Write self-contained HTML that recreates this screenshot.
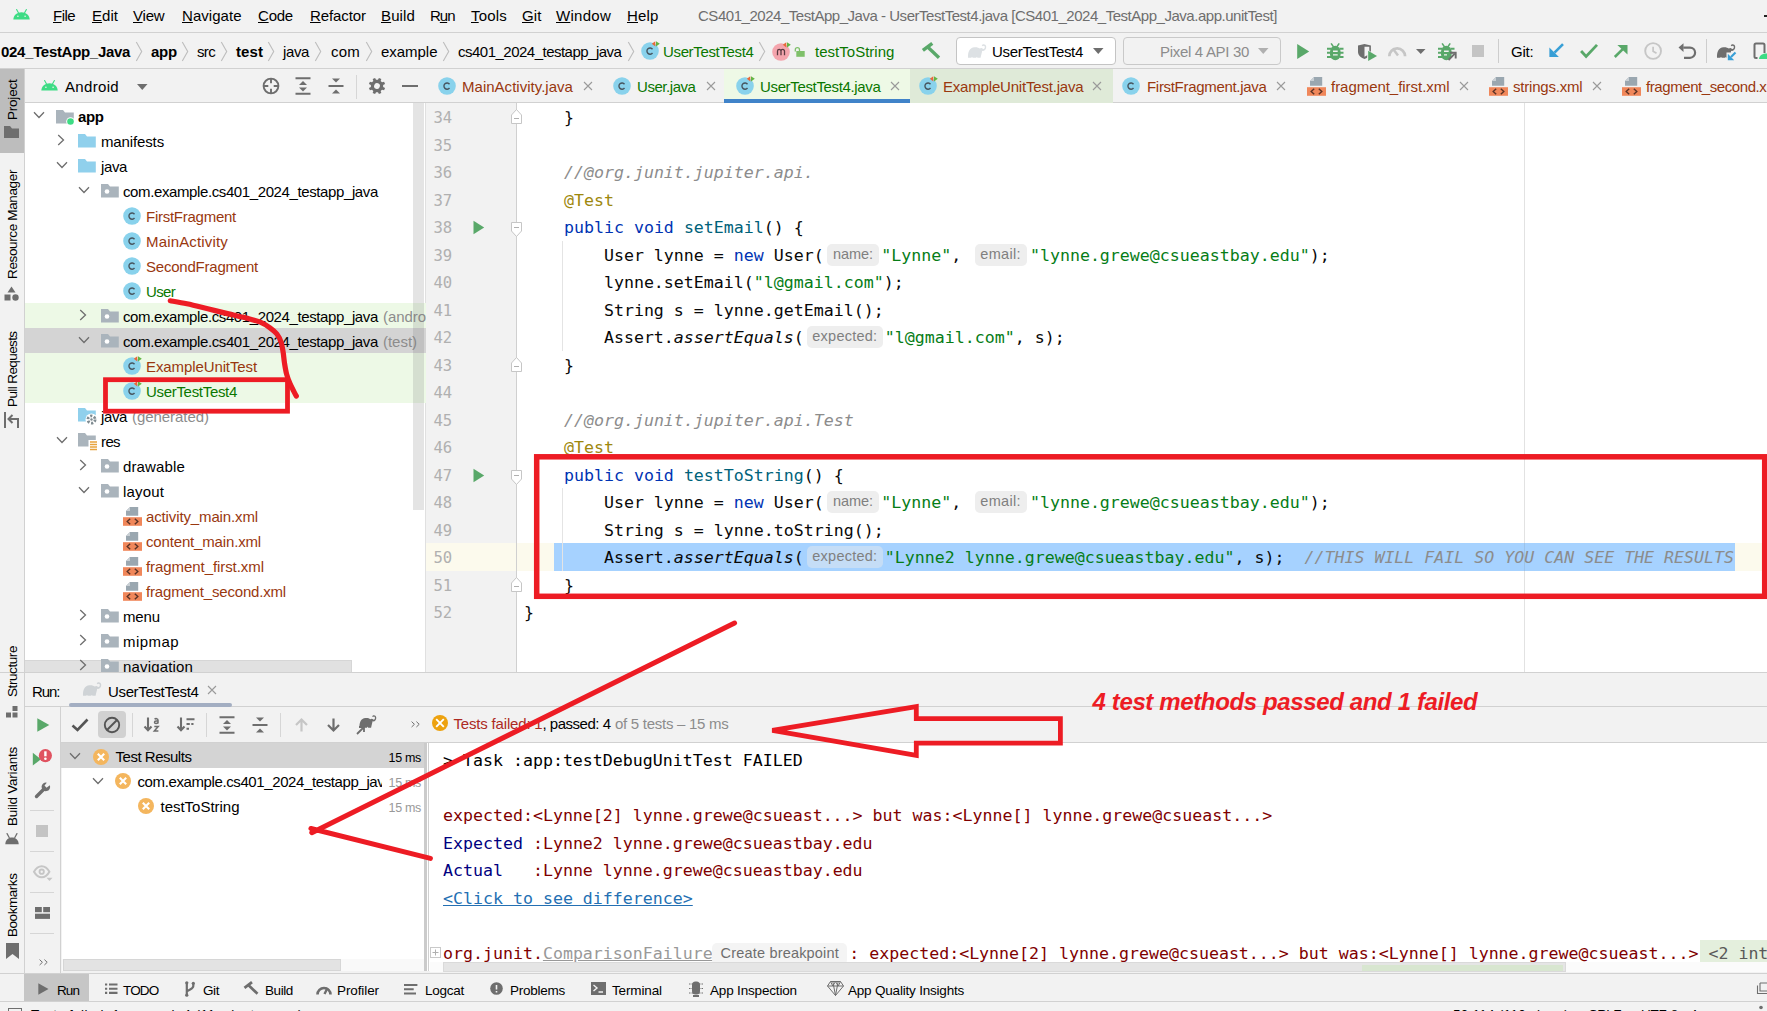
<!DOCTYPE html>
<html lang="en">
<head>
<meta charset="utf-8">
<title>CS401_2024_TestApp_Java - UserTestTest4.java</title>
<style>
html,body{margin:0;padding:0}
html{width:1767px;height:1011px;overflow:hidden}
body{width:1767px;height:1011px;overflow:hidden;position:relative;background:#f2f2f2;font-family:"Liberation Sans",sans-serif;font-size:15px;color:#000}
.root{position:absolute;left:0;top:0;width:1767px;height:1011px;overflow:hidden}
.a{position:absolute}
.t{position:absolute;white-space:pre;line-height:20px;height:20px;font-size:15px}
.b{font-weight:bold}
.g{color:#0a7700}
.br{color:#99380f}
.gy{color:#8c8c8c}
.m{font-family:"DejaVu Sans Mono","Liberation Mono",monospace;font-size:16.6px;letter-spacing:0}
.cl{position:absolute;left:524px;white-space:pre;height:28px;line-height:28px;font-family:"DejaVu Sans Mono","Liberation Mono",monospace;font-size:16.6px;color:#080808}
.ln{position:absolute;left:433.5px;width:22px;text-align:left;height:28px;line-height:28px;font-family:"DejaVu Sans Mono","Liberation Mono",monospace;font-size:15.600px;letter-spacing:-0.200px;color:#b0b0b0}
.kw{color:#0033b3}.st{color:#067d17}.cm{color:#8c8c8c;font-style:italic}.an{color:#9e880d}.fn{color:#00627a}.it{font-style:italic}
.hint{display:inline-block;box-sizing:border-box;height:22px;line-height:21px;vertical-align:middle;background:#eeeeee;border-radius:5px;color:#808080;font-family:"Liberation Sans",sans-serif;font-size:14.5px;text-align:center;margin:0 2.300px 0 3.300px;position:relative;top:-1.700px}
.sel .hint{background:#c5ddf6}
.co{position:absolute;left:443px;white-space:pre;height:28px;line-height:28px;font-family:"DejaVu Sans Mono","Liberation Mono",monospace;font-size:16.6px;color:#7f0000}
.vt{position:absolute;white-space:pre;font-size:13.5px;line-height:20px;height:20px;transform-origin:0 0;transform:rotate(-90deg)}
svg{position:absolute;overflow:visible}
.hl{position:absolute;height:1px;background:#d1d1d1}
.vl{position:absolute;width:1px;background:#d1d1d1}
</style>
</head>
<body>
<div class="root">
<!-- ===== panel backgrounds ===== -->
<div class="hl" style="left:0;top:32px;width:1767px"></div>
<div class="hl" style="left:0;top:68px;width:1767px"></div>
<!-- left tool strip -->
<div class="a" style="left:0;top:69px;width:24px;height:905px;background:#f2f2f2"></div>
<div class="vl" style="left:24px;top:69px;height:905px"></div>
<div class="a" style="left:0;top:69px;width:24px;height:84px;background:#bdbdbd"></div>
<!-- project panel -->
<div class="a" style="left:25px;top:103px;width:402px;height:569px;background:#fff"></div>
<div class="hl" style="left:25px;top:102px;width:402px"></div>
<!-- editor -->
<div class="a" style="left:426px;top:103px;width:1341px;height:569px;background:#fff"></div>
<div class="hl" style="left:426px;top:102px;width:1341px"></div>
<div class="a" style="left:426px;top:103px;width:90px;height:569px;background:#f2f2f2"></div>
<div class="vl" style="left:516px;top:103px;height:569px;background:#d0d0d0"></div>
<div class="vl" style="left:1524px;top:103px;height:569px;background:#e2e2e2"></div>
<!-- bottom panel -->
<div class="hl" style="left:0;top:672px;width:1767px"></div>
<div class="hl" style="left:25px;top:706px;width:1742px"></div>
<div class="a" style="left:62px;top:744px;width:363px;height:226px;background:#fff"></div>
<div class="a" style="left:429px;top:743px;width:1338px;height:228px;background:#fff"></div>
<div class="hl" style="left:61px;top:742px;width:1706px"></div>
<div class="hl" style="left:0;top:973px;width:1767px"></div>
<div class="hl" style="left:0;top:1001px;width:1767px"></div>
<!-- ===== menu bar ===== -->
<svg style="left:13px;top:9px" width="17" height="11" viewBox="0 0 17 11"><path d="M0.3 10.6C0.6 6 4 3.2 8.5 3.2S16.4 6 16.7 10.6Z" fill="#3ddc84"/><path d="M3.6 0.5L5.4 3.8M13.4 0.5L11.6 3.8" stroke="#3ddc84" stroke-width="1.1" stroke-linecap="round"/><circle cx="4.9" cy="7.3" r="0.8" fill="#f2f2f2"/><circle cx="12.1" cy="7.3" r="0.8" fill="#f2f2f2"/></svg>
<span class="t" style="letter-spacing:-0.55px;left:53px;top:5.500px"><u>F</u>ile</span>
<span class="t" style="letter-spacing:0.04px;left:92px;top:5.500px"><u>E</u>dit</span>
<span class="t" style="letter-spacing:-0.19px;left:133px;top:5.500px"><u>V</u>iew</span>
<span class="t" style="letter-spacing:0.04px;left:182px;top:5.500px"><u>N</u>avigate</span>
<span class="t" style="letter-spacing:-0.22px;left:258px;top:5.500px"><u>C</u>ode</span>
<span class="t" style="letter-spacing:-0.09px;left:310px;top:5.500px"><u>R</u>efactor</span>
<span class="t" style="letter-spacing:0.13px;left:381px;top:5.500px"><u>B</u>uild</span>
<span class="t" style="letter-spacing:-1.01px;left:430px;top:5.500px">R<u>u</u>n</span>
<span class="t" style="letter-spacing:0.19px;left:471px;top:5.500px"><u>T</u>ools</span>
<span class="t" style="letter-spacing:0.11px;left:522px;top:5.500px"><u>G</u>it</span>
<span class="t" style="letter-spacing:0.27px;left:556px;top:5.500px"><u>W</u>indow</span>
<span class="t" style="letter-spacing:0.16px;left:627px;top:5.500px"><u>H</u>elp</span>
<span class="t" style="letter-spacing:-0.47px;left:698px;top:5.500px;color:#6e6e6e">CS401_2024_TestApp_Java - UserTestTest4.java [CS401_2024_TestApp_Java.app.unitTest]</span>
<div class="a" style="left:1763.500px;top:15px;width:4px;height:1.500px;background:#222"></div>

<!-- ===== navigation bar ===== -->
<svg width="0" height="0" style="left:0;top:0">
<defs>
<g id="chev"><path d="M0.300 0L5.700 9.500L0.300 19" fill="none" stroke="#bdbdbd" stroke-width="1.100"/></g>
<g id="icC"><circle cx="9" cy="9" r="8.800" fill="#89d2ec"/><path d="M11.500 7.200A3.100 3.100 0 1 0 11.500 11" fill="none" stroke="#46545e" stroke-width="1.400"/></g>
<g id="icCt"><circle cx="9" cy="9" r="8.800" fill="#89d2ec"/><path d="M11.500 7.200A3.100 3.100 0 1 0 11.500 11" fill="none" stroke="#46545e" stroke-width="1.400"/><path d="M10 -1H19V5.500H10Z" fill="#fff" fill-opacity="0.001"/><path d="M14.300 -0.800V4.400L10.800 1.800Z" fill="#e8683a"/><path d="M15 -0.800V4.400L18.800 1.800Z" fill="#62b543"/></g>
<g id="icX"><rect x="0" y="7.5" width="15" height="7" fill="#f0875a"/><path d="M3.5 0.5H11V7H1.5V2.5Z" fill="#9aa7b0"/><path d="M3.5 0.5V2.5H1.5" fill="none" stroke="#f2f2f2" stroke-width="0.8"/><path d="M5.5 9L3.2 11L5.5 13M9.5 9L11.8 11L9.5 13" fill="none" stroke="#5a3a2a" stroke-width="1.2"/></g>
<g id="icX2"><rect x="0" y="10.200" width="19" height="8.600" fill="#f0875a"/><path d="M7 0H15.200V8.800H3V4Z" fill="#9aa7b0"/><path d="M3 4L7 0V4Z" fill="#c9d0d5"/><path d="M7.200 11.800L4.200 14.500L7.200 17.200M11.800 11.800L14.800 14.500L11.800 17.200" fill="none" stroke="#5a3226" stroke-width="1.400"/></g>
<g id="tabx"><path d="M0 0L8 8M8 0L0 8" stroke="#9a9a9a" stroke-width="1.1"/></g>
</defs></svg>
<span class="t b" style="letter-spacing:-0.31px;left:1px;top:42px">024_TestApp_Java</span>
<svg style="left:136px;top:42px" width="6" height="19"><use href="#chev"/></svg>
<span class="t b" style="letter-spacing:-0.22px;left:151px;top:42px">app</span>
<svg style="left:182px;top:42px" width="6" height="19"><use href="#chev"/></svg>
<span class="t" style="letter-spacing:-0.67px;left:197px;top:42px">src</span>
<svg style="left:221px;top:42px" width="6" height="19"><use href="#chev"/></svg>
<span class="t b" style="letter-spacing:0.08px;left:236px;top:42px">test</span>
<svg style="left:268px;top:42px" width="6" height="19"><use href="#chev"/></svg>
<span class="t" style="letter-spacing:-0.38px;left:283px;top:42px">java</span>
<svg style="left:315px;top:42px" width="6" height="19"><use href="#chev"/></svg>
<span class="t" style="letter-spacing:0.22px;left:331px;top:42px">com</span>
<svg style="left:366px;top:42px" width="6" height="19"><use href="#chev"/></svg>
<span class="t" style="letter-spacing:-0.03px;left:381px;top:42px">example</span>
<svg style="left:443px;top:42px" width="6" height="19"><use href="#chev"/></svg>
<span class="t" style="letter-spacing:-0.51px;left:458px;top:42px">cs401_2024_testapp_java</span>
<svg style="left:628px;top:42px" width="6" height="19"><use href="#chev"/></svg>
<svg style="left:641px;top:42px" width="18" height="18"><use href="#icCt"/></svg>
<span class="t g" style="letter-spacing:-0.35px;left:663px;top:42px">UserTestTest4</span>
<svg style="left:759px;top:42px" width="6" height="19"><use href="#chev"/></svg>
<svg style="left:772px;top:42.600px" width="34" height="18"><circle cx="9" cy="9" r="8.800" fill="#f4a5ad"/><path d="M5.500 12.200V8.200A1.750 1.750 0 0 1 9 8.200V12.200M9 8.200A1.750 1.750 0 0 1 12.500 8.200V12.200" fill="none" stroke="#5a3a40" stroke-width="1.300"/><path d="M14.300 -0.800V4.400L10.800 1.800Z" fill="#e8683a"/><path d="M15 -0.800V4.400L18.800 1.800Z" fill="#62b543"/><rect x="24.300" y="8" width="8.400" height="5.800" fill="#7fc06a"/><path d="M23.300 8.500V6.800A2.100 2.100 0 0 1 27.500 6.800V8" fill="none" stroke="#7fc06a" stroke-width="1.300"/></svg>
<span class="t g" style="letter-spacing:0.02px;left:815px;top:42px">testToString</span>
<!-- hammer -->
<svg style="left:921px;top:42px" width="21" height="18"><path d="M1.900 8.400L11.300 1.300" stroke="#59a869" stroke-width="3.400"/><path d="M6.700 5L18 15.800" stroke="#59a869" stroke-width="3.300"/></svg>
<!-- run config combo -->
<div class="a" style="left:956px;top:37px;width:158px;height:26px;background:#fff;border:1px solid #c4c4c4;border-radius:4px;box-sizing:content-box"></div>
<svg style="left:967.600px;top:44.200px" width="19" height="14"><path d="M0 13.800C-0.300 8 1.500 3.500 6.500 3.200C9 3 10.500 3.600 11.800 4.600C12.800 3.600 14.300 3.800 15 5C16.300 5.300 17 4 16.800 2.800C16.600 1.500 15.300 1.300 14.800 2.200L13.700 1.600C14.500 -0.400 17.800 -0.200 18.200 2.600C18.600 5.500 16.300 7.600 14.200 6.800C13.800 9 13.200 11 12.600 13.800H9.400C9.400 12.600 8.300 12.600 8.300 13.800H4.600C4.600 12.600 3.400 12.600 3.400 13.800Z" fill="#dde1e4"/></svg>
<span class="t" style="letter-spacing:-0.31px;left:992px;top:42px">UserTestTest4</span>
<svg style="left:1093px;top:48px" width="11" height="6"><path d="M0 0H10.5L5.25 6Z" fill="#6e6e6e"/></svg>
<div class="a" style="left:1123px;top:37px;width:156px;height:26px;background:#f2f2f2;border:1px solid #c9c9c9;border-radius:4px;box-sizing:content-box"></div>
<span class="t" style="letter-spacing:-0.31px;left:1160px;top:42px;color:#8c8c8c">Pixel 4 API 30</span>
<svg style="left:1258px;top:48px" width="11" height="6"><path d="M0 0H10.5L5.25 6Z" fill="#b0b0b0"/></svg>
<!-- run -->
<svg style="left:1297px;top:43.500px" width="13" height="15"><path d="M0.200 0L12.200 7.500L0.200 15Z" fill="#59a869"/></svg>
<!-- debug bug -->
<svg style="left:1326.700px;top:42.500px" width="17" height="18"><path d="M4.100 0.400L6.500 3.900M12.200 0.400L9.800 3.900" stroke="#59a869" stroke-width="1.600" fill="none"/><path d="M0 5.700H4M0 9.800H4M0 13.900H4M12.500 5.700H16.500M12.500 9.800H16.500M12.500 13.900H16.500" stroke="#59a869" stroke-width="2" fill="none"/><rect x="3" y="2.800" width="10.600" height="14.400" rx="5.300" ry="6" fill="#59a869"/><path d="M6 8.300H10.700M6 11.900H10.700" stroke="#f2f2f2" stroke-width="1.400"/></svg>
<!-- coverage -->
<svg style="left:1358px;top:43.500px" width="20" height="18"><path d="M0 1.500L6.500 0L12.900 1.500V8C12.900 11.500 9.500 14 6.500 15C3.500 14 0 11.500 0 8Z" fill="#6e6e6e"/><path d="M6.500 2.700H11.300V8C11.300 10 9 11.700 6.500 12.700Z" fill="#f2f2f2"/><path d="M9.200 5.600L19.600 11.800L9.200 18Z" fill="#f2f2f2"/><path d="M10.200 6.800L19 11.900L10.200 17Z" fill="#59a869"/></svg>
<!-- profiler -->
<svg style="left:1387.800px;top:44.900px" width="19" height="13"><path d="M1.300 11.300A7.900 7.900 0 0 1 17.100 11.300" fill="none" stroke="#c6c6c6" stroke-width="2.700"/><path d="M10 10.500L4.800 3.500" stroke="#c6c6c6" stroke-width="2.500"/></svg>
<svg style="left:1416px;top:49px" width="10" height="5"><path d="M0 0H9.5L4.75 5Z" fill="#6e6e6e"/></svg>
<!-- attach debugger -->
<svg style="left:1438.100px;top:42.500px" width="20" height="20"><path d="M4.100 0.400L6.500 3.900M12.200 0.400L9.800 3.900" stroke="#59a869" stroke-width="1.600" fill="none"/><path d="M0 5.700H4M0 9.800H4M0 13.900H4M12.500 5.700H16.500M12.500 9.800H14.500" stroke="#59a869" stroke-width="2" fill="none"/><rect x="3" y="2.800" width="10.600" height="14.400" rx="5.300" ry="6" fill="#59a869"/><path d="M6 8.300H10.700M6 11.900H9" stroke="#f2f2f2" stroke-width="1.400"/><path d="M9 18.500L18.500 9V19Z" fill="#f2f2f2"/><path d="M10.500 17L16.800 10.700" stroke="#6e6e6e" stroke-width="1.900"/><path d="M12 9.800H17.700V15.500" fill="none" stroke="#6e6e6e" stroke-width="1.900"/></svg>
<!-- stop -->
<div class="a" style="left:1472px;top:45.400px;width:12px;height:11.700px;background:#c4c4c4"></div>
<div class="vl" style="left:1498px;top:39px;height:24px;background:#cdcdcd"></div>
<span class="t" style="letter-spacing:-0.21px;left:1511px;top:42px">Git:</span>
<svg style="left:1549px;top:43px" width="15" height="15"><path d="M14 1.200L5.500 9.700" stroke="#389fd6" stroke-width="2.600" fill="none"/><path d="M0.400 4.600V14.100H9.900Z" fill="#389fd6"/></svg>
<svg style="left:1580px;top:43px" width="18" height="15"><path d="M1.100 8L6.100 13.400L17 1.900" fill="none" stroke="#59a869" stroke-width="2.800"/></svg>
<svg style="left:1614px;top:43px" width="15" height="15"><path d="M0.800 14L9.500 5.300" stroke="#59a869" stroke-width="2.600" fill="none"/><path d="M3.400 1.900H13.500V11.400Z" fill="#59a869"/></svg>
<svg style="left:1644px;top:42px" width="18" height="18"><circle cx="9.100" cy="9" r="7.900" fill="none" stroke="#c6c6c6" stroke-width="1.900"/><path d="M9.100 4.800V9.200L12.500 11.200" fill="none" stroke="#c6c6c6" stroke-width="1.700"/></svg>
<svg style="left:1678px;top:42px" width="18" height="18"><path d="M5.300 5.600H12A5.100 5.100 0 0 1 12 15.800H6" fill="none" stroke="#6e6e6e" stroke-width="2.200"/><path d="M0.500 5.600L5.500 1.300V9.900Z" fill="#6e6e6e"/></svg>
<div class="vl" style="left:1706px;top:39px;height:24px;background:#cdcdcd"></div>
<svg style="left:1717px;top:44px" width="20" height="17"><path d="M0 13.800C-0.300 8 1.500 3.500 6.500 3.200C9 3 10.500 3.600 11.800 4.600C12.800 3.600 14.300 3.800 15 5C16.300 5.300 17 4 16.800 2.800C16.600 1.500 15.300 1.300 14.800 2.200L13.700 1.600C14.500 -0.400 17.800 -0.200 18.200 2.600C18.600 5.500 16.300 7.600 14.200 6.800C13.800 9 13.200 11 12.600 13.800H9.400C9.400 12.600 8.300 12.600 8.300 13.800H4.600C4.600 12.600 3.400 12.600 3.400 13.800Z" fill="#6e6e6e"/><path d="M9.500 8.500H20V17H9.500Z" fill="#f2f2f2"/><path d="M18.500 8.500L14 13" stroke="#389fd6" stroke-width="2.200" fill="none"/><path d="M10.800 9.800V16.200H17.200Z" fill="#389fd6"/></svg>
<svg style="left:1753px;top:42px" width="14" height="19"><rect x="1.500" y="1.500" width="10" height="14.500" rx="1.500" fill="none" stroke="#6e6e6e" stroke-width="2"/><path d="M4.500 11H14V19H4.500Z" fill="#f2f2f2"/><path d="M6 17C6.500 13 9.500 11.500 14 11.500V17Z" fill="#3ddc84"/></svg>

<!-- ===== project header + editor tabs ===== -->
<svg style="left:41px;top:80px" width="17" height="11" viewBox="0 0 17 11"><path d="M0.3 10.6C0.6 6 4 3.2 8.5 3.2S16.4 6 16.7 10.6Z" fill="#3ddc84"/><path d="M3.6 0.5L5.4 3.8M13.4 0.5L11.6 3.8" stroke="#3ddc84" stroke-width="1.1" stroke-linecap="round"/><circle cx="4.9" cy="7.3" r="0.8" fill="#f2f2f2"/><circle cx="12.1" cy="7.3" r="0.8" fill="#f2f2f2"/></svg>
<span class="t" style="letter-spacing:0.33px;left:65px;top:77px">Android</span>
<svg style="left:137px;top:84px" width="11" height="6"><path d="M0 0H10.5L5.25 6Z" fill="#6e6e6e"/></svg>
<svg style="left:262px;top:77px" width="18" height="18"><circle cx="9" cy="9" r="7.400" fill="none" stroke="#6e6e6e" stroke-width="1.900"/><path d="M9 1.500V6.300M9 11.700V16.500M1.500 9H6.300M11.700 9H16.500" stroke="#6e6e6e" stroke-width="1.900"/></svg>
<svg style="left:295px;top:77px" width="16" height="18"><path d="M0.500 1.200H15.500M0.500 16.800H15.500" stroke="#6e6e6e" stroke-width="2"/><path d="M4 8L8 4L12 8ZM4 10.500L8 14.500L12 10.500Z" fill="#6e6e6e"/></svg>
<svg style="left:328px;top:77px" width="16" height="18"><path d="M0.500 9H15.500" stroke="#6e6e6e" stroke-width="2"/><path d="M4 1.500L8 5.500L12 1.500ZM4 16.500L8 12.500L12 16.500Z" fill="#6e6e6e"/></svg>
<div class="vl" style="left:356px;top:75px;height:24px;background:#d6d6d6"></div>
<svg style="left:368px;top:77px" width="18" height="18"><path d="M15.03 7.55L17.20 7.70L17.20 10.30L15.03 10.45L14.29 12.24L15.71 13.88L13.88 15.71L12.24 14.29L10.45 15.03L10.30 17.20L7.70 17.20L7.55 15.03L5.76 14.29L4.12 15.71L2.29 13.88L3.71 12.24L2.97 10.45L0.80 10.30L0.80 7.70L2.97 7.55L3.71 5.76L2.29 4.12L4.12 2.29L5.76 3.71L7.55 2.97L7.70 0.80L10.30 0.80L10.45 2.97L12.24 3.71L13.88 2.29L15.71 4.12L14.29 5.76ZM11.90 9.00A2.90 2.90 0 1 0 6.10 9.00A2.90 2.90 0 1 0 11.90 9.00Z" fill="#6e6e6e" fill-rule="evenodd" transform="rotate(22.5 9 9)"/></svg>
<div class="a" style="left:402px;top:85px;width:16px;height:2px;background:#6e6e6e"></div>
<!-- tabs -->
<div class="a" style="left:910px;top:69px;width:203px;height:34px;background:#dfead8"></div>
<div class="a" style="left:724px;top:69px;width:186px;height:34px;background:#eef9e6"></div>
<div class="a" style="left:724px;top:99.300px;width:186px;height:3.700px;background:#4083c9"></div>
<svg style="left:438px;top:77px" width="18" height="18"><use href="#icC"/></svg>
<span class="t br" style="letter-spacing:0.02px;left:462px;top:77px">MainActivity.java</span>
<svg style="left:584px;top:82px" width="9" height="9"><use href="#tabx"/></svg>
<svg style="left:613px;top:77px" width="18" height="18"><use href="#icC"/></svg>
<span class="t g" style="letter-spacing:-0.45px;left:637px;top:77px">User.java</span>
<svg style="left:707px;top:82px" width="9" height="9"><use href="#tabx"/></svg>
<svg style="left:736px;top:77px" width="18" height="18"><use href="#icCt"/></svg>
<span class="t g" style="letter-spacing:-0.35px;left:760px;top:77px">UserTestTest4.java</span>
<svg style="left:891px;top:82px" width="9" height="9"><use href="#tabx"/></svg>
<svg style="left:919px;top:77px" width="18" height="18"><use href="#icCt"/></svg>
<span class="t br" style="letter-spacing:-0.19px;left:943px;top:77px">ExampleUnitTest.java</span>
<svg style="left:1093px;top:82px" width="9" height="9"><use href="#tabx"/></svg>
<svg style="left:1122px;top:77px" width="18" height="18"><use href="#icC"/></svg>
<span class="t br" style="letter-spacing:-0.31px;left:1147px;top:77px">FirstFragment.java</span>
<svg style="left:1277px;top:82px" width="9" height="9"><use href="#tabx"/></svg>
<svg style="left:1307px;top:77px" width="19" height="19"><use href="#icX2"/></svg>
<span class="t br" style="letter-spacing:-0.04px;left:1331px;top:77px">fragment_first.xml</span>
<svg style="left:1460px;top:82px" width="9" height="9"><use href="#tabx"/></svg>
<svg style="left:1489px;top:77px" width="19" height="19"><use href="#icX2"/></svg>
<span class="t br" style="letter-spacing:-0.2px;left:1513px;top:77px">strings.xml</span>
<svg style="left:1593px;top:82px" width="9" height="9"><use href="#tabx"/></svg>
<svg style="left:1622px;top:77px" width="19" height="19"><use href="#icX2"/></svg>
<span class="t br" style="letter-spacing:-0.42px;left:1646px;top:77px">fragment_second.xr</span>

<!-- ===== left tool strip ===== -->
<span class="vt" style="letter-spacing:-0.22px;left:3px;top:120px">Project</span>
<svg style="left:4px;top:126px" width="15" height="12"><path d="M0 0H6L8 2.500H15V12H0Z" fill="#6e6e6e"/></svg>
<span class="vt" style="letter-spacing:-0.36px;left:3px;top:279px">Resource Manager</span>
<svg style="left:4px;top:286px" width="15" height="15"><path d="M7.500 0.500L11.500 6.500H3.500Z" fill="#6e6e6e"/><rect x="0.500" y="8.500" width="6" height="6" fill="#6e6e6e"/><circle cx="11.500" cy="11.500" r="3.200" fill="#6e6e6e"/></svg>
<span class="vt" style="letter-spacing:-0.6px;left:3px;top:407px">Pull Requests</span>
<svg style="left:4px;top:412px" width="15" height="16"><path d="M1 0V16" stroke="#6e6e6e" stroke-width="2"/><path d="M14 16V7H5" fill="none" stroke="#6e6e6e" stroke-width="2"/><path d="M8.500 3L4.500 7L8.500 11" fill="none" stroke="#6e6e6e" stroke-width="2"/></svg>
<span class="vt" style="letter-spacing:-0.42px;left:3px;top:697px">Structure</span>
<svg style="left:6px;top:706px" width="12" height="12"><rect x="6.500" y="0" width="5" height="5" fill="#6e6e6e"/><rect x="0" y="6.500" width="5" height="5" fill="#6e6e6e"/><rect x="6.500" y="6.500" width="5" height="5" fill="#6e6e6e"/></svg>
<span class="vt" style="letter-spacing:-0.24px;left:3px;top:826px">Build Variants</span>
<svg style="left:5px;top:833px" width="14" height="11.500" viewBox="0 0 17 14"><path d="M0.300 13.600C0.600 8.500 4 5.500 8.500 5.500S16.400 8.500 16.700 13.600Z" fill="#6e6e6e"/><path d="M2.500 0.800L5.200 5.800M14.500 0.800L11.800 5.800" stroke="#6e6e6e" stroke-width="1.500" stroke-linecap="round"/></svg>
<span class="vt" style="letter-spacing:-0.45px;left:3px;top:937px">Bookmarks</span>
<svg style="left:6px;top:943px" width="13" height="16"><path d="M0 0H13V16L6.500 11L0 16Z" fill="#6e6e6e"/></svg>

<!-- ===== project tree ===== -->
<div class="a" style="left:25px;top:103px;width:401px;height:569px;overflow:hidden">
<div class="a" style="left:400px;top:0;width:1px;height:569px;background:#e0e0e0"></div>
<div class="a" style="left:0;top:200.2px;width:401px;height:25px;background:#edf9e6"></div>
<div class="a" style="left:0;top:225.2px;width:401px;height:25px;background:#d4d4d4"></div>
<div class="a" style="left:0;top:250.2px;width:401px;height:50px;background:#edf9e6"></div>
<div class="a" style="left:0;top:556.500px;width:327px;height:12.500px;background:#e1e1e1;border:1px solid #d6d6d6;border-left:0;border-bottom:0;box-sizing:border-box"></div>
<svg style="left:8px;top:8px" width="12" height="8"><path d="M1 1.200L6 6.500L11 1.200" fill="none" stroke="#6e6e6e" stroke-width="1.300"/></svg>
<svg style="left:31px;top:6.8px" width="22" height="17"><path d="M0 0H7L9 2.500H17.800V13.600H0Z" fill="#aab4bc"/><circle cx="14.500" cy="11.500" r="4.300" fill="#fff"/><circle cx="14.500" cy="11.500" r="3.300" fill="#3ddc84"/></svg>
<span class="t b" style="letter-spacing:-0.42px;left:53px;top:3.8px">app</span>
<svg style="left:32px;top:31px" width="8" height="12"><path d="M1.200 1L6.500 6L1.200 11" fill="none" stroke="#6e6e6e" stroke-width="1.300"/></svg>
<svg style="left:53px;top:30.8px" width="18" height="14"><path d="M0 0H7L9 2.500H17.800V13.600H0Z" fill="#90d0ec"/></svg>
<span class="t" style="letter-spacing:-0.13px;left:76px;top:28.8px">manifests</span>
<svg style="left:31px;top:58px" width="12" height="8"><path d="M1 1.200L6 6.500L11 1.200" fill="none" stroke="#6e6e6e" stroke-width="1.300"/></svg>
<svg style="left:53px;top:55.8px" width="18" height="14"><path d="M0 0H7L9 2.500H17.800V13.600H0Z" fill="#90d0ec"/></svg>
<span class="t" style="letter-spacing:-0.38px;left:76px;top:53.8px">java</span>
<svg style="left:53px;top:83px" width="12" height="8"><path d="M1 1.200L6 6.500L11 1.200" fill="none" stroke="#6e6e6e" stroke-width="1.300"/></svg>
<svg style="left:76px;top:80.8px" width="18" height="14"><path d="M0 0H7L9 2.500H17.800V13.600H0Z" fill="#aab4bc"/><circle cx="6" cy="7.500" r="2.300" fill="#fff"/></svg>
<span class="t" style="letter-spacing:-0.39px;left:98px;top:78.8px">com.example.cs401_2024_testapp_java</span>
<svg style="left:98px;top:104px" width="18" height="18"><use href="#icC"/></svg>
<span class="t br" style="letter-spacing:-0.26px;left:121px;top:103.8px">FirstFragment</span>
<svg style="left:98px;top:129px" width="18" height="18"><use href="#icC"/></svg>
<span class="t br" style="letter-spacing:0.16px;left:121px;top:128.8px">MainActivity</span>
<svg style="left:98px;top:154px" width="18" height="18"><use href="#icC"/></svg>
<span class="t br" style="letter-spacing:-0.22px;left:121px;top:153.8px">SecondFragment</span>
<svg style="left:98px;top:179px" width="18" height="18"><use href="#icC"/></svg>
<span class="t g" style="letter-spacing:-0.67px;left:121px;top:178.8px">User</span>
<svg style="left:54px;top:206px" width="8" height="12"><path d="M1.200 1L6.500 6L1.200 11" fill="none" stroke="#6e6e6e" stroke-width="1.300"/></svg>
<svg style="left:76px;top:205.8px" width="18" height="14"><path d="M0 0H7L9 2.500H17.800V13.600H0Z" fill="#aab4bc"/><circle cx="6" cy="7.500" r="2.300" fill="#fff"/></svg>
<span class="t" style="letter-spacing:-0.39px;left:98px;top:203.8px">com.example.cs401_2024_testapp_java</span>
<span class="t gy" style="letter-spacing:-0.04px;left:358px;top:203.8px">(androidTest)</span>
<svg style="left:53px;top:233px" width="12" height="8"><path d="M1 1.200L6 6.500L11 1.200" fill="none" stroke="#6e6e6e" stroke-width="1.300"/></svg>
<svg style="left:76px;top:230.8px" width="18" height="14"><path d="M0 0H7L9 2.500H17.800V13.600H0Z" fill="#aab4bc"/><circle cx="6" cy="7.500" r="2.300" fill="#fff"/></svg>
<span class="t" style="letter-spacing:-0.39px;left:98px;top:228.8px">com.example.cs401_2024_testapp_java</span>
<span class="t gy" style="letter-spacing:-0.03px;left:358px;top:228.8px">(test)</span>
<svg style="left:98px;top:254px" width="18" height="18"><use href="#icCt"/></svg>
<span class="t br" style="letter-spacing:-0.1px;left:121px;top:253.8px">ExampleUnitTest</span>
<svg style="left:98px;top:279px" width="18" height="18"><use href="#icCt"/></svg>
<span class="t g" style="letter-spacing:-0.31px;left:121px;top:278.8px">UserTestTest4</span>
<svg style="left:53px;top:305px" width="20" height="18"><path d="M0 0H7L9 2.500H17.800V13.600H0Z" fill="#90d0ec"/><circle cx="13.500" cy="11.500" r="6" fill="#fff"/><circle cx="13.500" cy="11.500" r="3.600" fill="none" stroke="#7f8b91" stroke-width="2.800" stroke-dasharray="2.200 1.600"/><circle cx="13.500" cy="11.500" r="1.200" fill="#7f8b91"/></svg>
<span class="t" style="letter-spacing:-0.38px;left:76px;top:303.8px">java</span>
<span class="t gy" style="letter-spacing:-0.05px;left:107px;top:303.8px">(generated)</span>
<svg style="left:31px;top:333px" width="12" height="8"><path d="M1 1.200L6 6.500L11 1.200" fill="none" stroke="#6e6e6e" stroke-width="1.300"/></svg>
<svg style="left:53px;top:330px" width="20" height="18"><path d="M0 0H7L9 2.500H17.800V13.600H0Z" fill="#aab4bc"/><rect x="10.500" y="7" width="9.500" height="10.500" fill="#fff"/><path d="M12 9H19M12 11.500H19M12 14H19M12 16.500H19" stroke="#e8a33d" stroke-width="1.400"/></svg>
<span class="t" style="letter-spacing:-0.61px;left:76px;top:328.8px">res</span>
<svg style="left:54px;top:356px" width="8" height="12"><path d="M1.200 1L6.500 6L1.200 11" fill="none" stroke="#6e6e6e" stroke-width="1.300"/></svg>
<svg style="left:76px;top:355.8px" width="18" height="14"><path d="M0 0H7L9 2.500H17.800V13.600H0Z" fill="#aab4bc"/><circle cx="6" cy="7.500" r="2.300" fill="#fff"/></svg>
<span class="t" style="letter-spacing:0.14px;left:98px;top:353.8px">drawable</span>
<svg style="left:53px;top:383px" width="12" height="8"><path d="M1 1.200L6 6.500L11 1.200" fill="none" stroke="#6e6e6e" stroke-width="1.300"/></svg>
<svg style="left:76px;top:380.8px" width="18" height="14"><path d="M0 0H7L9 2.500H17.800V13.600H0Z" fill="#aab4bc"/><circle cx="6" cy="7.500" r="2.300" fill="#fff"/></svg>
<span class="t" style="letter-spacing:0.16px;left:98px;top:378.8px">layout</span>
<svg style="left:97.7px;top:404.2px" width="19" height="19"><use href="#icX2"/></svg>
<span class="t br" style="letter-spacing:-0.13px;left:121px;top:403.8px">activity_main.xml</span>
<svg style="left:97.7px;top:429.2px" width="19" height="19"><use href="#icX2"/></svg>
<span class="t br" style="letter-spacing:-0.16px;left:121px;top:428.8px">content_main.xml</span>
<svg style="left:97.7px;top:454.2px" width="19" height="19"><use href="#icX2"/></svg>
<span class="t br" style="letter-spacing:-0.07px;left:121px;top:453.8px">fragment_first.xml</span>
<svg style="left:97.7px;top:479.2px" width="19" height="19"><use href="#icX2"/></svg>
<span class="t br" style="letter-spacing:-0.18px;left:121px;top:478.8px">fragment_second.xml</span>
<svg style="left:54px;top:506px" width="8" height="12"><path d="M1.200 1L6.500 6L1.200 11" fill="none" stroke="#6e6e6e" stroke-width="1.300"/></svg>
<svg style="left:76px;top:505.8px" width="18" height="14"><path d="M0 0H7L9 2.500H17.800V13.600H0Z" fill="#aab4bc"/><circle cx="6" cy="7.500" r="2.300" fill="#fff"/></svg>
<span class="t" style="letter-spacing:-0.13px;left:98px;top:503.8px">menu</span>
<svg style="left:54px;top:531px" width="8" height="12"><path d="M1.200 1L6.500 6L1.200 11" fill="none" stroke="#6e6e6e" stroke-width="1.300"/></svg>
<svg style="left:76px;top:530.8px" width="18" height="14"><path d="M0 0H7L9 2.500H17.800V13.600H0Z" fill="#aab4bc"/><circle cx="6" cy="7.500" r="2.300" fill="#fff"/></svg>
<span class="t" style="letter-spacing:0.44px;left:98px;top:528.8px">mipmap</span>
<svg style="left:54px;top:556px" width="8" height="12"><path d="M1.200 1L6.500 6L1.200 11" fill="none" stroke="#6e6e6e" stroke-width="1.300"/></svg>
<svg style="left:76px;top:555.8px" width="18" height="14"><path d="M0 0H7L9 2.500H17.800V13.600H0Z" fill="#aab4bc"/><circle cx="6" cy="7.500" r="2.300" fill="#fff"/></svg>
<span class="t" style="letter-spacing:0.16px;left:98px;top:553.8px">navigation</span>
<div class="a" style="left:388px;top:0;width:11px;height:407px;background:rgba(120,120,120,0.2)"></div>
</div>

<!-- ===== editor ===== -->
<div class="a" style="left:426px;top:543.300px;width:1341px;height:27.300px;background:#fcfaed"></div>
<div class="a" style="left:554px;top:543.300px;width:1181px;height:27.300px;background:#a6d2ff"></div>
<div class="vl" style="left:516px;top:543px;height:28px;background:#d0d0d0"></div>
<div class="vl" style="left:1524px;top:543.300px;height:27.300px;background:#9dc3ea"></div>
<div class="vl" style="left:562px;top:241px;height:110px;background:#e4e4e4"></div>
<div class="vl" style="left:562px;top:488px;height:82.500px;background:#e4e4e4"></div>
<span class="ln" style="top:103.8px">34</span>
<span class="cl" style="top:103.8px">    }</span>
<span class="ln" style="top:131.8px">35</span>
<span class="ln" style="top:158.8px">36</span>
<span class="cl" style="top:158.8px">    <span class="cm">//@org.junit.jupiter.api.</span></span>
<span class="ln" style="top:186.8px">37</span>
<span class="cl" style="top:186.8px">    <span class="an">@Test</span></span>
<span class="ln" style="top:213.8px">38</span>
<span class="cl" style="top:213.8px">    <span class="kw">public void</span> <span class="fn">setEmail</span>() {</span>
<span class="ln" style="top:241.8px">39</span>
<span class="cl" style="top:241.8px">        User lynne = <span class="kw">new</span> User(<span class="hint" style="width:52px"><span style="letter-spacing:-0.06px">name:</span></span><span class="st">"Lynne"</span>, <span class="hint" style="width:52px;margin-right:3.400px"><span style="letter-spacing:0.3px">email:</span></span><span class="st">"lynne.grewe@csueastbay.edu"</span>);</span>
<span class="ln" style="top:268.8px">40</span>
<span class="cl" style="top:268.8px">        lynne.setEmail(<span class="st">"l@gmail.com"</span>);</span>
<span class="ln" style="top:296.8px">41</span>
<span class="cl" style="top:296.8px">        String s = lynne.getEmail();</span>
<span class="ln" style="top:323.8px">42</span>
<span class="cl" style="top:323.8px">        Assert.<span class="it">assertEquals</span>(<span class="hint" style="width:75.500px"><span style="letter-spacing:0.23px">expected:</span></span><span class="st">"l@gmail.com"</span>, s);</span>
<span class="ln" style="top:351.8px">43</span>
<span class="cl" style="top:351.8px">    }</span>
<span class="ln" style="top:378.8px">44</span>
<span class="ln" style="top:406.8px">45</span>
<span class="cl" style="top:406.8px">    <span class="cm">//@org.junit.jupiter.api.Test</span></span>
<span class="ln" style="top:433.8px">46</span>
<span class="cl" style="top:433.8px">    <span class="an">@Test</span></span>
<span class="ln" style="top:461.8px">47</span>
<span class="cl" style="top:461.8px">    <span class="kw">public void</span> <span class="fn">testToString</span>() {</span>
<span class="ln" style="top:488.8px">48</span>
<span class="cl" style="top:488.8px">        User lynne = <span class="kw">new</span> User(<span class="hint" style="width:52px"><span style="letter-spacing:-0.06px">name:</span></span><span class="st">"Lynne"</span>, <span class="hint" style="width:52px;margin-right:3.400px"><span style="letter-spacing:0.3px">email:</span></span><span class="st">"lynne.grewe@csueastbay.edu"</span>);</span>
<span class="ln" style="top:516.8px">49</span>
<span class="cl" style="top:516.8px">        String s = lynne.toString();</span>
<span class="ln" style="top:543.8px">50</span>
<span class="cl sel" style="top:543.8px">        Assert.<span class="it">assertEquals</span>(<span class="hint" style="width:75.500px"><span style="letter-spacing:0.23px">expected:</span></span><span class="st">"Lynne2 lynne.grewe@csueastbay.edu"</span>, s);  <span class="cm">//THIS WILL FAIL SO YOU CAN SEE THE RESULTS</span></span>
<span class="ln" style="top:571.8px">51</span>
<span class="cl" style="top:571.8px">    }</span>
<span class="ln" style="top:598.8px">52</span>
<span class="cl" style="top:598.8px">}</span>
<svg style="left:472px;top:219.5px" width="14" height="15"><path d="M1.500 0.800L12.200 7.500L1.500 14.200Z" fill="#59a869"/></svg>
<svg style="left:472px;top:467.5px" width="14" height="15"><path d="M1.500 0.800L12.200 7.500L1.500 14.200Z" fill="#59a869"/></svg>
<svg style="left:510.500px;top:222px" width="11" height="15"><path d="M0.500 0.500H10.500V9L5.500 14.500L0.500 9Z" fill="#fff" stroke="#c6c6c6"/><path d="M3 5.500H8" stroke="#b0b0b0"/></svg>
<svg style="left:510.500px;top:470px" width="11" height="15"><path d="M0.500 0.500H10.500V9L5.500 14.500L0.500 9Z" fill="#fff" stroke="#c6c6c6"/><path d="M3 5.500H8" stroke="#b0b0b0"/></svg>
<svg style="left:510.500px;top:109px" width="11" height="15"><path d="M0.500 14.500H10.500V6L5.500 0.500L0.500 6Z" fill="#fff" stroke="#c6c6c6"/><path d="M3 9.500H8" stroke="#b0b0b0"/></svg>
<svg style="left:510.500px;top:357px" width="11" height="15"><path d="M0.500 14.500H10.500V6L5.500 0.500L0.500 6Z" fill="#fff" stroke="#c6c6c6"/><path d="M3 9.500H8" stroke="#b0b0b0"/></svg>
<svg style="left:510.500px;top:577px" width="11" height="15"><path d="M0.500 14.500H10.500V6L5.500 0.500L0.500 6Z" fill="#fff" stroke="#c6c6c6"/><path d="M3 9.500H8" stroke="#b0b0b0"/></svg>

<!-- ===== run tool window ===== -->
<svg width="0" height="0" style="left:0;top:0"><defs>
<g id="icFail"><circle cx="8" cy="8" r="8" fill="#f4b65e"/><path d="M4.800 4.800L11.200 11.200M11.200 4.800L4.800 11.200" stroke="#fff" stroke-width="2.100"/></g>
<g id="eleph"><path d="M0 13.800C-0.300 8 1.500 3.500 6.500 3.200C9 3 10.500 3.600 11.800 4.600C12.800 3.600 14.300 3.800 15 5C16.300 5.300 17 4 16.800 2.800C16.600 1.500 15.300 1.300 14.800 2.200L13.700 1.600C14.500 -0.400 17.800 -0.200 18.200 2.600C18.600 5.500 16.300 7.600 14.200 6.800C13.800 9 13.200 11 12.600 13.800H9.400C9.400 12.600 8.300 12.600 8.300 13.800H4.600C4.600 12.600 3.400 12.600 3.400 13.800Z"/></g>
</defs></svg>
<span class="t" style="letter-spacing:-1.05px;left:32px;top:681.500px">Run:</span>
<svg style="left:83px;top:682px" width="20" height="15" fill="#cfd3d6"><use href="#eleph"/></svg>
<span class="t" style="letter-spacing:-0.35px;left:108px;top:681.500px">UserTestTest4</span>
<svg style="left:208px;top:686px" width="9" height="9"><use href="#tabx"/></svg>
<div class="a" style="left:69px;top:703px;width:163px;height:3.700px;background:#a3aec2;border-radius:2px"></div>
<div class="vl" style="left:59.500px;top:707px;height:266px"></div>
<!-- left mini toolbar -->
<svg style="left:37px;top:718px" width="13" height="14"><path d="M0.300 0.300L12.300 7L0.300 13.700Z" fill="#59a869"/></svg>
<svg style="left:32px;top:748px" width="21" height="19"><path d="M0.800 4.800L9 11.200L0.800 17.600Z" fill="#59a869"/><circle cx="13.400" cy="7.600" r="6.600" fill="#e05260"/><path d="M13.400 3.300V8.300" stroke="#fff" stroke-width="2.400"/><circle cx="13.400" cy="10.800" r="1.300" fill="#fff"/></svg>
<svg style="left:34px;top:782px" width="17" height="17" viewBox="0 0 17 17"><path d="M2.500 14.500L9.500 7.500" stroke="#6e6e6e" stroke-width="3.400" stroke-linecap="round"/><path d="M15.800 3.200A4.300 4.300 0 1 1 12.800 0.700L10.500 3.500L12.500 5.800Z" fill="#6e6e6e"/></svg>
<div class="hl" style="left:30px;top:810px;width:24px;background:#d6d6d6"></div>
<div class="a" style="left:36px;top:825px;width:12px;height:12px;background:#c4c4c4"></div>
<div class="hl" style="left:30px;top:851px;width:24px;background:#d6d6d6"></div>
<svg style="left:33px;top:865px" width="20" height="17"><path d="M1 6.700C3.200 2.700 6 1.200 8.700 1.200S14.200 2.700 16.400 6.700C14.200 10.700 11.400 12.200 8.700 12.200S3.200 10.700 1 6.700Z" fill="none" stroke="#c6c6c6" stroke-width="2"/><circle cx="8.700" cy="6.700" r="3.100" fill="#c6c6c6"/><circle cx="8.700" cy="6.700" r="1.200" fill="#f2f2f2"/><path d="M13.500 12.800H19.500L16.500 16Z" fill="#c6c6c6"/></svg>
<div class="hl" style="left:30px;top:892px;width:24px;background:#d6d6d6"></div>
<svg style="left:34.500px;top:907px" width="15" height="12"><rect x="0" y="0" width="6.800" height="5.200" fill="#6e6e6e"/><rect x="8.200" y="0" width="6.800" height="5.200" fill="#6e6e6e"/><rect x="0" y="6.700" width="15" height="5.200" fill="#6e6e6e"/></svg>
<div class="hl" style="left:30px;top:933px;width:24px;background:#d6d6d6"></div>
<svg style="left:38.500px;top:958.500px" width="10" height="7"><path d="M0.600 0.600L3.400 3.300L0.600 6M5.400 0.600L8.200 3.300L5.400 6" fill="none" stroke="#6e6e6e" stroke-width="1"/></svg>
<!-- test toolbar -->
<svg style="left:71px;top:718px" width="18" height="14"><path d="M1.500 7.500L6.500 12L16.500 1.500" fill="none" stroke="#555" stroke-width="2.600"/></svg>
<div class="a" style="left:98px;top:711px;width:28px;height:27px;background:#d1d1d1;border-radius:4px"></div>
<svg style="left:103px;top:716px" width="18" height="18"><circle cx="9" cy="9" r="7.200" fill="none" stroke="#555" stroke-width="1.900"/><path d="M4 14L14 4" stroke="#555" stroke-width="1.900"/></svg>
<div class="vl" style="left:132px;top:713px;height:24px;background:#d6d6d6"></div>
<svg style="left:144px;top:716px" width="18" height="18" viewBox="0 0 18 18"><path d="M4 1.500V14M0.500 10.500L4 14.300L7.500 10.500" fill="none" stroke="#6e6e6e" stroke-width="2.100"/><path d="M10.600 3.300C11.500 2.300 14 2.300 14 4.200V7.500M14 5H12C10 5 10 7.500 12 7.500C13 7.500 14 7 14 6" fill="none" stroke="#6e6e6e" stroke-width="1.500"/><path d="M10.300 10.500H14.200L10.300 15H14.400" fill="none" stroke="#6e6e6e" stroke-width="1.500"/></svg>
<svg style="left:177px;top:716px" width="18" height="18" viewBox="0 0 18 18"><path d="M4 1.500V14M0.500 10.500L4 14.300L7.500 10.500" fill="none" stroke="#6e6e6e" stroke-width="2.100"/><path d="M9.500 3.300H17.500M9.500 8H12.800M14.300 8H16.500M9.500 12.700H12" stroke="#6e6e6e" stroke-width="2.100"/></svg>
<div class="vl" style="left:206px;top:713px;height:24px;background:#d6d6d6"></div>
<svg style="left:219px;top:716px" width="16" height="18"><path d="M0.500 1.200H15.500M0.500 16.800H15.500" stroke="#6e6e6e" stroke-width="2"/><path d="M4 8L8 4L12 8ZM4 10.500L8 14.500L12 10.500Z" fill="#6e6e6e"/></svg>
<svg style="left:252px;top:716px" width="16" height="18"><path d="M0.500 9H15.500" stroke="#6e6e6e" stroke-width="2"/><path d="M4 1.500L8 5.500L12 1.500ZM4 16.500L8 12.500L12 16.500Z" fill="#6e6e6e"/></svg>
<div class="vl" style="left:280px;top:713px;height:24px;background:#d6d6d6"></div>
<svg style="left:295px;top:718px" width="13" height="14"><path d="M6.500 13.500V1.800M1 7L6.500 1.500L12 7" fill="none" stroke="#c6c6c6" stroke-width="2.200"/></svg>
<svg style="left:327px;top:718px" width="13" height="14"><path d="M6.500 0.500V12.200M1 7L6.500 12.500L12 7" fill="none" stroke="#6e6e6e" stroke-width="2.200"/></svg>
<svg style="left:356px;top:715px" width="21" height="20" viewBox="0 0 21 20"><g transform="translate(3.500,0) scale(0.920)" fill="#6e6e6e"><use href="#eleph"/></g><path d="M0 15H8V20H0Z" fill="#f2f2f2"/><path d="M1 19L7.500 12.500M3 12H8V17" fill="none" stroke="#6e6e6e" stroke-width="1.800"/></svg>
<svg style="left:410.500px;top:720.500px" width="10" height="7"><path d="M0.600 0.600L3.400 3.300L0.600 6M5.400 0.600L8.200 3.300L5.400 6" fill="none" stroke="#6e6e6e" stroke-width="1"/></svg>
<!-- test tree -->
<div class="a" style="left:61px;top:743px;width:1px;height:25px;background:#d4d4d4"></div>
<div class="a" style="left:62px;top:743px;width:363px;height:228px;background:#fff;overflow:hidden">
<div class="a" style="left:0;top:0;width:364px;height:25px;background:#d4d4d4"></div>
<svg style="left:7px;top:8.500px" width="12" height="8"><path d="M1 1.200L6 6.500L11 1.200" fill="none" stroke="#6e6e6e" stroke-width="1.300"/></svg>
<svg style="left:31px;top:5.500px" width="16" height="16"><use href="#icFail"/></svg>
<span class="t" style="letter-spacing:-0.48px;left:53.500px;top:4px">Test Results</span>
<span class="t" style="letter-spacing:-0.31px;left:326.500px;top:4.500px;font-size:12.500px">15 ms</span>
<svg style="left:30px;top:33.500px" width="12" height="8"><path d="M1 1.200L6 6.500L11 1.200" fill="none" stroke="#6e6e6e" stroke-width="1.300"/></svg>
<svg style="left:53px;top:30px" width="16" height="16"><use href="#icFail"/></svg>
<span class="t" style="letter-spacing:-0.39px;left:75.500px;top:28.500px">com.example.cs401_2024_testapp_java</span>
<div class="a" style="left:320px;top:25px;width:44px;height:25px;background:#fff"></div>
<span class="t" style="letter-spacing:-0.31px;left:326.500px;top:29.500px;font-size:12.500px;color:#999">15 ms</span>
<svg style="left:76px;top:55px" width="16" height="16"><use href="#icFail"/></svg>
<span class="t" style="letter-spacing:-0.02px;left:98.500px;top:53.500px">testToString</span>
<span class="t" style="letter-spacing:-0.31px;left:326.500px;top:54.500px;font-size:12.500px;color:#999">15 ms</span>
<div class="a" style="left:0;top:216px;width:364px;height:12px;background:#f9f9f9"></div>
<div class="a" style="left:0.500px;top:216.300px;width:278.500px;height:11.500px;background:#e3e3e3;border:1px solid #d6d6d6;box-sizing:border-box"></div>
</div>
<div class="a" style="left:424px;top:743px;width:3px;height:228px;background:#cbcbcb"></div>
<div class="a" style="left:427px;top:743px;width:1.300px;height:228px;background:#fff"></div>
<div class="a" style="left:428.300px;top:743px;width:0.900px;height:228px;background:#d0d0d0"></div>

<!-- ===== test status + console ===== -->
<svg style="left:432px;top:715px" width="16" height="16"><circle cx="8" cy="8" r="8" fill="#eda20f"/><path d="M4.200 4.200L11.800 11.800M11.800 4.200L4.200 11.800" stroke="#fff" stroke-width="1.900"/></svg>
<span class="t" style="letter-spacing:-0.18px;left:453.500px;top:714.300px;font-size:15px;color:#ad2a22">Tests failed: 1</span>
<span class="t" style="letter-spacing:-0.49px;left:542.500px;top:714.300px;font-size:15px">, passed: 4</span>
<span class="t" style="letter-spacing:-0.27px;left:615px;top:714.300px;font-size:15px;color:#8c8c8c">of 5 tests – 15 ms</span>
<span class="co" style="top:747px;color:#000">&gt; Task :app:testDebugUnitTest FAILED</span>
<span class="co" style="top:802px">expected:&lt;Lynne[2] lynne.grewe@csueast...&gt; but was:&lt;Lynne[] lynne.grewe@csueast...&gt;</span>
<span class="co" style="top:829.500px"><span style="color:#000080">Expected </span>:Lynne2 lynne.grewe@csueastbay.edu</span>
<span class="co" style="top:857px"><span style="color:#000080">Actual   </span>:Lynne lynne.grewe@csueastbay.edu</span>
<span class="co" style="top:884.500px;color:#2470b3;text-decoration:underline">&lt;Click to see difference&gt;</span>
<svg style="left:430px;top:947px" width="11" height="11"><rect x="0.500" y="0.500" width="10" height="10" fill="#fff" stroke="#c9c9c9"/><path d="M2.500 5.500H8.500M5.500 2.500V8.500" stroke="#b0b0b0"/></svg>
<div class="a" style="left:1699.500px;top:940px;width:70px;height:27px;background:#e4efdd"></div>
<span class="co" style="top:939.500px">org.junit.<span style="color:#999;text-decoration:underline">ComparisonFailure</span><span class="hint" style="width:135px;margin:0 2px 0 -0.500px;background:#f4f4f4;font-size:14.500px;top:0.200px;color:#6e6e6e"><span style="letter-spacing:0.19px">Create breakpoint</span></span>: expected:&lt;Lynne[2] lynne.grewe@csueast...&gt; but was:&lt;Lynne[] lynne.grewe@csueast...&gt; <span style="color:#595959">&lt;2 internal lines&gt;</span></span>
<!-- console h-scrollbar -->
<div class="a" style="left:430px;top:961.500px;width:1337px;height:10px;background:#fbfbfb"></div>
<div class="a" style="left:443px;top:961.500px;width:1123px;height:10px;background:#e5e5e5;border:1px solid #dadada;box-sizing:border-box"></div>
<div class="a" style="left:1362px;top:965px;width:201px;height:6px;background:#d8e6d0"></div>

<!-- ===== bottom tool window bar + status bar ===== -->
<div class="a" style="left:0;top:974px;width:1767px;height:27px;background:#f2f2f2"></div>
<div class="a" style="left:24px;top:974px;width:65px;height:27px;background:#c6c6c6"></div>
<svg style="left:38px;top:983px" width="11" height="12"><path d="M0.300 0.300L10.500 6L0.300 11.700Z" fill="#6e6e6e"/></svg>
<span class="t" style="letter-spacing:-0.92px;left:57px;top:981px;font-size:13.500px">Run</span>
<svg style="left:104.500px;top:983px" width="13" height="12"><path d="M0 1.500H2.200M4 1.500H12.500M0 5.700H2.200M4 5.700H12.500M0 9.900H2.200M4 9.900H12.500" stroke="#6e6e6e" stroke-width="2.100"/></svg>
<span class="t" style="letter-spacing:-0.82px;left:123px;top:981px;font-size:13.500px">TODO</span>
<svg style="left:184px;top:981px" width="12" height="16"><path d="M2.800 1.500V14.500M9.300 2.500V5C9.300 8 5.500 8 2.800 10.500" fill="none" stroke="#6e6e6e" stroke-width="2.200"/><circle cx="2.800" cy="1.800" r="1.600" fill="#6e6e6e"/><circle cx="2.800" cy="14.200" r="1.600" fill="#6e6e6e"/><circle cx="9.300" cy="2.300" r="1.600" fill="#6e6e6e"/></svg>
<span class="t" style="letter-spacing:-0.42px;left:203px;top:981px;font-size:13.500px">Git</span>
<svg style="left:243px;top:981px" width="17" height="15"><path d="M1.500 6.800L9 1.100" stroke="#6e6e6e" stroke-width="2.800"/><path d="M5.300 4L14.500 12.800" stroke="#6e6e6e" stroke-width="2.700"/></svg>
<span class="t" style="letter-spacing:-0.41px;left:265px;top:981px;font-size:13.500px">Build</span>
<svg style="left:316px;top:984px" width="16" height="11"><path d="M1.500 10.500A6.500 6.500 0 0 1 14.500 10.500" fill="none" stroke="#6e6e6e" stroke-width="2.600"/><path d="M8.500 10L11.500 4" stroke="#6e6e6e" stroke-width="2.400"/></svg>
<span class="t" style="letter-spacing:-0.1px;left:337px;top:981px;font-size:13.500px">Profiler</span>
<svg style="left:404px;top:984px" width="14" height="11"><path d="M0 1H13.400M0 5.300H9.700M0 9.600H12" stroke="#6e6e6e" stroke-width="2"/></svg>
<span class="t" style="letter-spacing:-0.26px;left:425px;top:981px;font-size:13.500px">Logcat</span>
<svg style="left:490px;top:982px" width="13" height="13"><circle cx="6.500" cy="6.500" r="6.300" fill="#6e6e6e"/><path d="M6.500 3V7.500M6.500 9V10.500" stroke="#f2f2f2" stroke-width="1.600"/></svg>
<span class="t" style="letter-spacing:-0.25px;left:510px;top:981px;font-size:13.500px">Problems</span>
<svg style="left:591px;top:982px" width="15" height="13"><rect x="0" y="0" width="15" height="13" fill="#6e6e6e"/><path d="M2.500 3L6 6L2.500 9M7.500 10H12" fill="none" stroke="#f2f2f2" stroke-width="1.400"/></svg>
<span class="t" style="letter-spacing:-0.13px;left:612px;top:981px;font-size:13.500px">Terminal</span>
<svg style="left:689px;top:981px" width="14" height="16"><path d="M0 3H14M0 7.500H14M0 12H14" stroke="#6e6e6e" stroke-width="1.200" stroke-dasharray="1.500 1"/><rect x="3" y="0.500" width="8" height="13" rx="3.500" fill="#6e6e6e"/><path d="M4 14V16H10V14" fill="#6e6e6e"/></svg>
<span class="t" style="letter-spacing:-0.17px;left:710px;top:981px;font-size:13.500px">App Inspection</span>
<svg style="left:827px;top:981px" width="17" height="15"><path d="M3.500 0.500H13.500L16.500 5L8.500 14.500L0.500 5Z M0.500 5H16.500M5.800 0.500L8.500 14.500L11.200 0.500M3.500 0.500L5.800 5L8.500 0.500L11.200 5L13.500 0.500" fill="none" stroke="#6e6e6e" stroke-width="1"/></svg>
<span class="t" style="letter-spacing:-0.2px;left:848px;top:981px;font-size:13.500px">App Quality Insights</span>
<svg style="left:1757px;top:982px" width="10" height="12"><path d="M3 1H10M3 1V9H10M0.500 3.500V11.500H10" fill="none" stroke="#6e6e6e" stroke-width="1.100"/></svg>
<!-- status bar (cropped) -->

<div class="a" style="left:0;top:1002px;width:1767px;height:9px;overflow:hidden">
<div class="a" style="left:8px;top:5.500px;width:14px;height:12px;border:1.500px solid #6e6e6e;box-sizing:border-box"></div>
<span class="t" style="letter-spacing:0.45px;left:31px;top:2.600px;font-size:13.500px">Tests failed: 1, passed: 4 (11 minutes ago)</span>
<span class="t" style="letter-spacing:0.26px;left:1453px;top:2.600px;font-size:13.500px">50:114 (110 chars)</span>
<span class="t" style="letter-spacing:-0.57px;left:1588px;top:2.600px;font-size:13.500px">CRLF</span>
<span class="t" style="letter-spacing:-0.25px;left:1641px;top:2.600px;font-size:13.500px">UTF-8</span>
<span class="t" style="letter-spacing:-0.26px;left:1690px;top:2.600px;font-size:13.500px">4 spaces</span>
<svg style="left:1758px;top:3px" width="6" height="8"><circle cx="3" cy="2.500" r="1.800" fill="#6e6e6e"/><path d="M0 10C0 6 6 6 6 10Z" fill="#6e6e6e"/></svg>
</div>

<!-- ===== red hand-drawn annotations ===== -->
<svg style="left:0;top:0" width="1767" height="1011" viewBox="0 0 1767 1011" fill="none" stroke="#ed1c24" stroke-linecap="round" stroke-linejoin="miter">
<rect x="105.500" y="379.700" width="182" height="31.500" stroke-width="4.800"/>
<path d="M170.3 300.8C173.1 301.3 180.7 302.5 186.9 303.8C193.1 305.1 200.8 307.1 207.7 308.8C214.6 310.5 222.0 312.3 228.5 313.9C235.0 315.4 241.2 316.7 246.5 318.1C251.8 319.5 256.4 320.6 260.3 322.2C264.2 323.8 267.2 325.8 270.0 327.8C272.8 329.8 275.0 331.6 276.9 334.0C278.8 336.4 280.1 339.3 281.1 342.3C282.1 345.3 282.5 348.5 283.1 352.0C283.7 355.5 283.9 359.4 284.5 363.1C285.1 366.8 285.7 370.7 286.6 374.1C287.5 377.6 288.8 380.8 290.1 383.8C291.4 386.8 293.2 390.1 294.2 392.1C295.2 394.1 295.9 395.4 296.3 396.0" stroke-width="5.200"/>
<rect x="536.700" y="456.800" width="1228" height="139.500" stroke-width="5.500"/>
<path d="M734.600 623L311.800 832.700M310.900 828.500L430.400 858.400" stroke-width="5"/>
<path d="M772.300 730.300L916.300 706.700V718.700H1060.400V743.200H916.300V755.300Z" stroke-width="4.800"/>
</svg>
<span class="t b" style="letter-spacing:-0.37px;left:1092.500px;top:686.500px;height:30px;line-height:30px;font-size:24px;font-style:italic;color:#ed1c24">4 test methods passed and 1 failed</span>

</div>
</body>
</html>
